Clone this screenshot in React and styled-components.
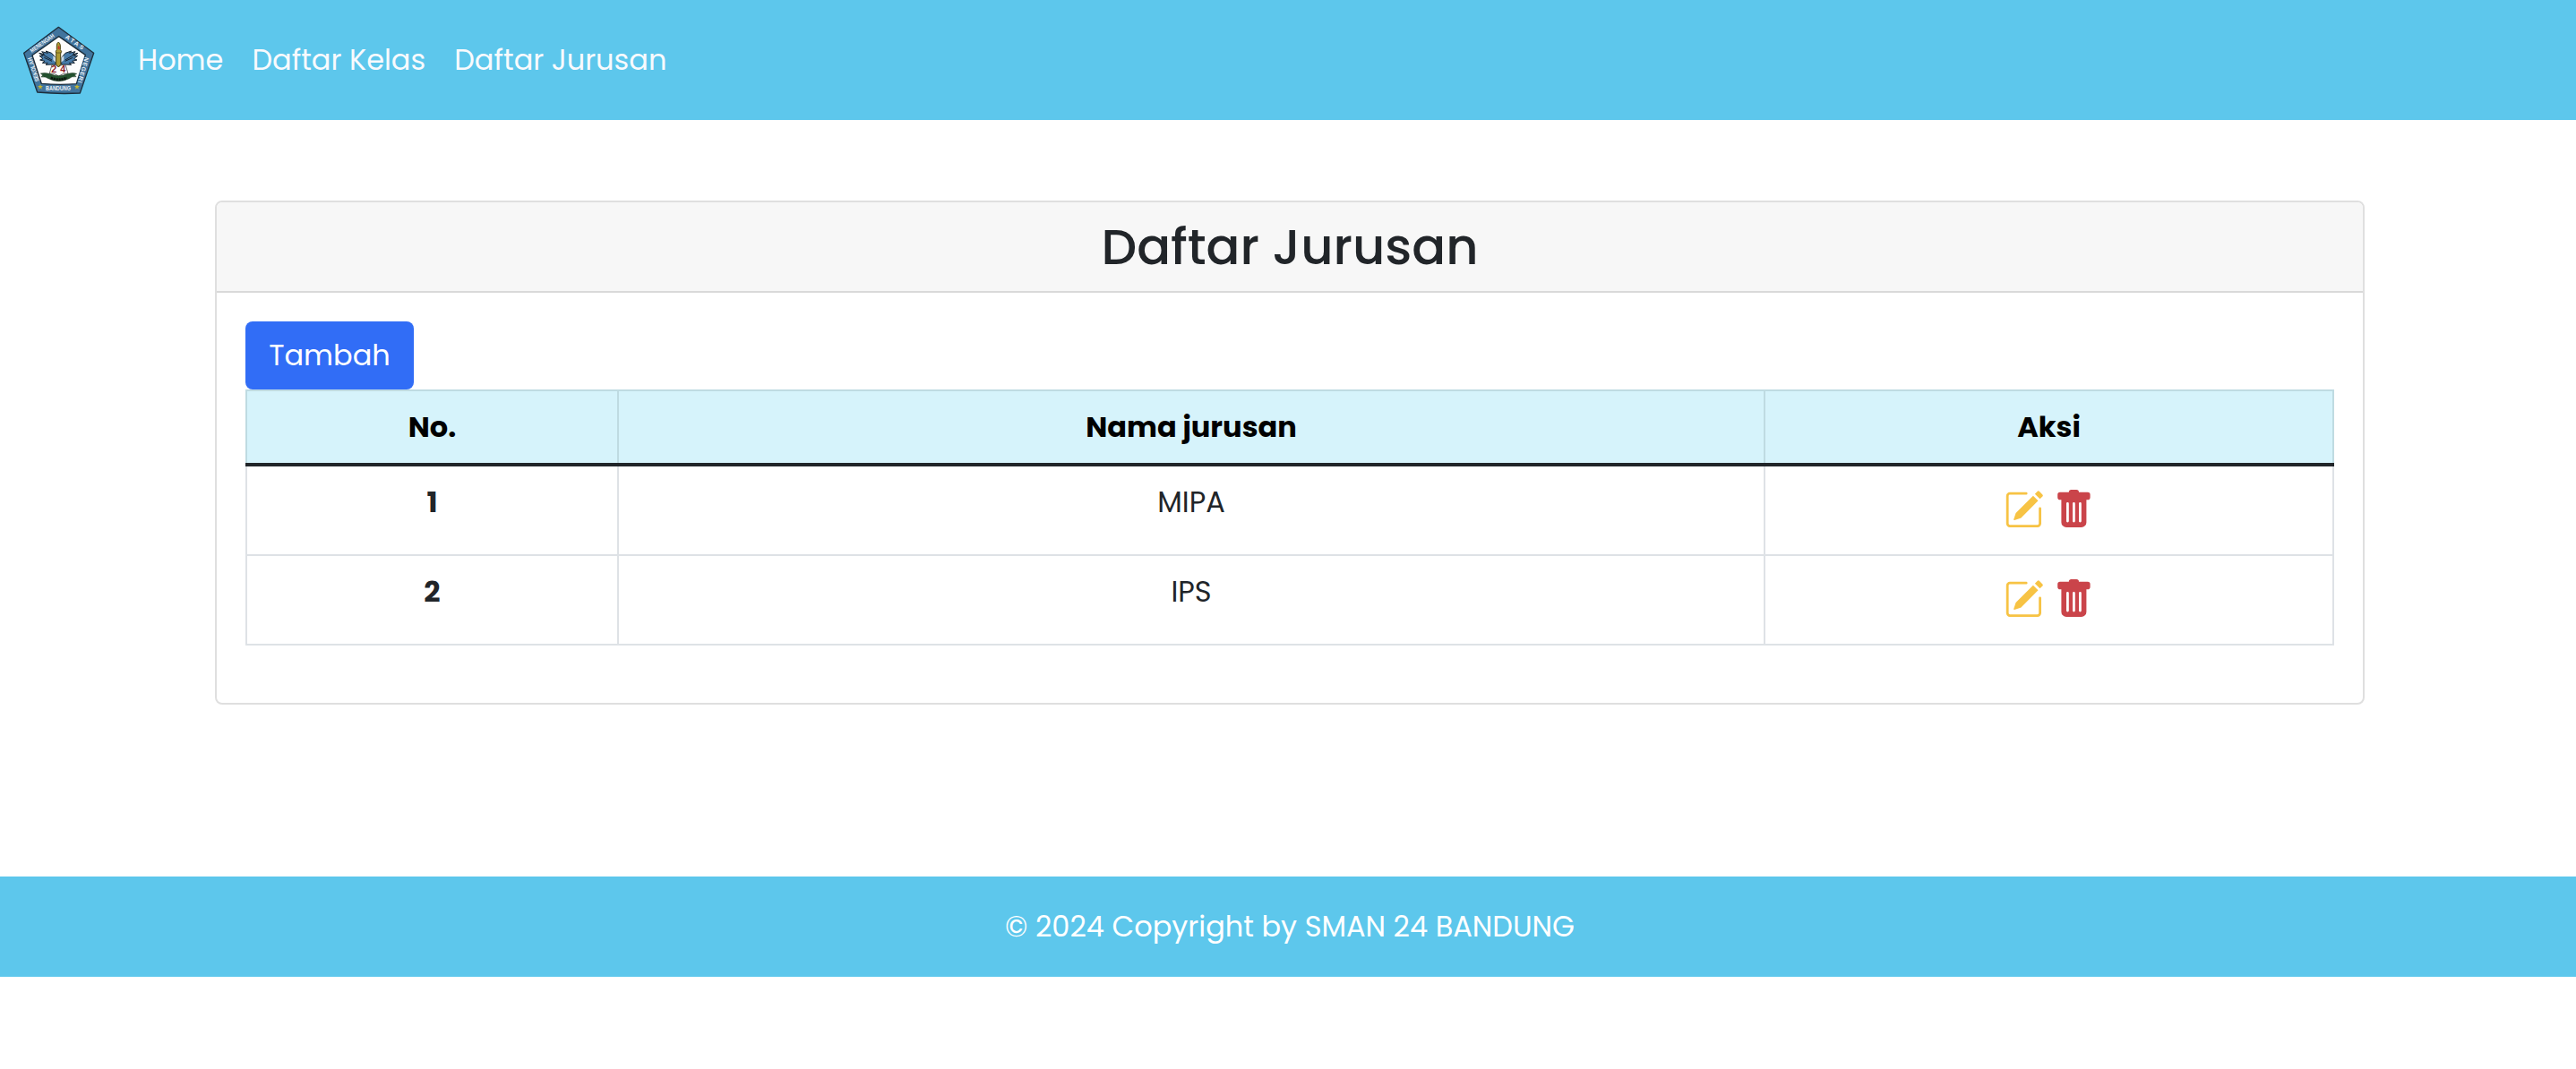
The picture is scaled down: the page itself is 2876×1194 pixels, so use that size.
import React from "react";
import styled, { createGlobalStyle } from "styled-components";
import { BsPencilSquare, BsTrashFill } from "react-icons/bs";

const sky = "#5dc7ec";
const ink = "#212529";

const GlobalStyle = createGlobalStyle`
  *, *::before, *::after { box-sizing: border-box; }
  html { overflow-x: hidden; }
  body {
    margin: 0;
    overflow-x: hidden;
    background: #fff;
    color: ${ink};
    font-family: Poppins, Inter, "Liberation Sans", sans-serif;
    font-size: 32px;
    line-height: 48px;
  }
`;

const Page = styled.div`
  width: 2880px;
`;

const Navbar = styled.nav`
  display: flex;
  align-items: center;
  height: 134px;
  padding-left: 25px;
  background: ${sky};
`;

const Brand = styled.a`
  display: flex;
  margin-right: 48px;
`;

const NavList = styled.ul`
  display: flex;
  gap: 32px;
  margin: 0;
  padding: 0;
  list-style: none;
`;

const NavLink = styled.a`
  display: block;
  color: #f8fafd;
  text-decoration: none;
`;

const Card = styled.main`
  width: 2400px;
  margin: 90px auto 0;
  border: 2px solid #dfdfdf;
  border-radius: 8px;
  overflow: hidden;
`;

const CardHeader = styled.header`
  height: 101px;
  padding: 16px 32px;
  background: #f7f7f7;
  border-bottom: 2px solid #d9d9d9;
`;

const Title = styled.h3`
  margin: 0;
  font-size: 56px;
  font-weight: 500;
  line-height: 67.2px;
  text-align: center;
`;

const CardBody = styled.div`
  padding: 32px 32px 64px;
`;

const AddButton = styled.button`
  display: block;
  width: 188px;
  height: 76px;
  padding: 0;
  border: 0;
  border-radius: 8px;
  background: #316df6;
  color: #fff;
  font: inherit;
  line-height: 48px;
`;

const Table = styled.table`
  display: block;
  width: 2332px;
`;

const Section = styled.tbody`
  display: block;
`;

const Row = styled.tr`
  display: grid;
  grid-template-columns: 417px 1280px 635px;
  height: ${(p) => (p.$head ? 86 : 100)}px;
  ${(p) =>
    p.$head &&
    `
    background: #d6f3fb;
    border-bottom: 4px solid ${ink};
  `}
`;

const Cell = styled.td`
  padding: 16px 0 0;
  border-right: 2px solid #dee2e6;
  border-bottom: 2px solid #dee2e6;
  font-weight: 400;
  text-align: center;
  &:first-child { border-left: 2px solid #dee2e6; }
`;

const RowNumber = styled(Cell)`
  font-weight: 700;
`;

const HeadCell = styled(Cell)`
  border: 0 solid #bfdbe2;
  border-top-width: 2px;
  border-right-width: 2px;
  color: #000;
  font-weight: 700;
  &:first-child { border-left: 2px solid #bfdbe2; }
`;

const Actions = styled.div`
  display: flex;
  justify-content: center;
  gap: 10.8px;
  padding-top: 9.5px;
`;

const IconLink = styled.a`
  display: flex;
  color: ${(p) => p.$color};
  font-size: 44.8px;
`;

const Footer = styled.footer`
  height: 112px;
  margin-top: 192px;
  padding: 32px;
  background: ${sky};
  color: #fff;
  text-align: center;
`;

const Lettering = styled.text`
  fill: #edf3f8;
  font-family: "Liberation Sans", sans-serif;
  font-size: 20px;
  font-weight: 700;
  text-anchor: middle;
`;

const Year = styled(Lettering)`
  fill: #8c1c28;
  font-size: 32px;
`;

const Wing = ({ flip }) => (
  <g transform={flip ? "translate(392 0) scale(-1 1)" : undefined} stroke="#14222f" strokeWidth="3" strokeLinejoin="round">
    <path d="M131 181l17 4-8-9 20 5-7-7 20 7 13 15v24l-12-1-21 1 7-6-18 0 8-6-16-4 10-4-12-10 12 0z" fill="#477ba8" />
    <path d="M140 184l34 20M148 196l26 12" fill="none" />
    <path d="M178 190l9 6v16l-9-8z" fill="#c9d9e6" stroke="none" />
  </g>
);

const starPoints = "0,-9 2.3,-3 9,-2.8 3.7,1.3 5.5,8 0,4 -5.5,8 -3.7,1.3 -9,-2.8 -2.3,-3";

const SchoolLogo = () => (
  <svg width="81" height="77" viewBox="75 90 243 231" aria-label="SMAN 24 Bandung">
    <path d="M196 94L314 181L268 315Q196 319 125 312L80 181Z" fill="#41749d" stroke="#1c2e3c" strokeWidth="4" strokeLinejoin="round" />
    <path d="M197 125L286 187L256 284Q196 289 139 283L108 188Z" fill="#fdfdfc" stroke="#1c2e3c" strokeWidth="4" />
    <Lettering transform="translate(145 153) rotate(-35)" textLength="94" lengthAdjust="spacingAndGlyphs">MENENGAH</Lettering>
    <Lettering transform="translate(246 150) rotate(35)" textLength="70">ATAS</Lettering>
    <Lettering transform="translate(119 234) rotate(-108)" textLength="84" lengthAdjust="spacingAndGlyphs">SEKOLAH</Lettering>
    <Lettering transform="translate(272 236) rotate(106)" textLength="88">NEGERI</Lettering>
    <Lettering x="195" y="305" textLength="84" lengthAdjust="spacingAndGlyphs">BANDUNG</Lettering>
    <polygon points={starPoints} transform="translate(135 294)" fill="#c3b52f" />
    <polygon points={starPoints} transform="translate(258 294)" fill="#c3b52f" />
    <Wing />
    <Wing flip />
    <path d="M166 249L174 220Q186 218 196 226Q208 218 219 220L228 249Q210 248 197 258Q184 248 166 249Z" fill="#fff" stroke="#222" strokeWidth="2" />
    <Year x="181" y="245">2</Year>
    <Year x="211" y="245">4</Year>
    <path d="M136 249Q150 246 166 250Q196 264 228 250Q244 245 257 250L250 254L255 260Q240 258 232 266Q196 284 162 266Q152 259 138 261L143 255Z" fill="#23512e" stroke="#1c3521" strokeWidth="1.5" />
    <path d="M170 264Q196 275 224 264" fill="none" stroke="#0c1710" strokeWidth="9" strokeDasharray="7 2" />
    <path d="M187 175L190 170V156Q190 147 196 144Q202 149 202 156V170L206 175L203 182V219L196 228L188 219V182Z" fill="#ad9a33" stroke="#4d4517" strokeWidth="3" />
    <path d="M187 180H206" stroke="#4d4517" strokeWidth="2" />
    <path d="M196 155Q203 161 199 169Q190 168 196 155Z" fill="#c33b2a" />
  </svg>
);

const links = ["Home", "Daftar Kelas", "Daftar Jurusan"];
const columns = ["No.", "Nama jurusan", "Aksi"];
const majors = ["MIPA", "IPS"];

export default function App() {
  return (
    <Page>
      <GlobalStyle />
      <Navbar>
        <Brand>
          <SchoolLogo />
        </Brand>
        <NavList>
          {links.map((label) => (
            <li key={label}>
              <NavLink>{label}</NavLink>
            </li>
          ))}
        </NavList>
      </Navbar>
      <Card>
        <CardHeader>
          <Title>Daftar Jurusan</Title>
        </CardHeader>
        <CardBody>
          <AddButton>Tambah</AddButton>
          <Table>
            <Section as="thead">
              <Row $head>
                {columns.map((label) => (
                  <HeadCell as="th" key={label}>
                    {label}
                  </HeadCell>
                ))}
              </Row>
            </Section>
            <Section>
              {majors.map((name, index) => (
                <Row key={name}>
                  <RowNumber as="th">{index + 1}</RowNumber>
                  <Cell>{name}</Cell>
                  <Cell>
                    <Actions>
                      <IconLink $color="#f7c344">
                        <BsPencilSquare />
                      </IconLink>
                      <IconLink $color="#ca444a">
                        <BsTrashFill />
                      </IconLink>
                    </Actions>
                  </Cell>
                </Row>
              ))}
            </Section>
          </Table>
        </CardBody>
      </Card>
      <Footer>© 2024 Copyright by SMAN 24 BANDUNG</Footer>
    </Page>
  );
}
